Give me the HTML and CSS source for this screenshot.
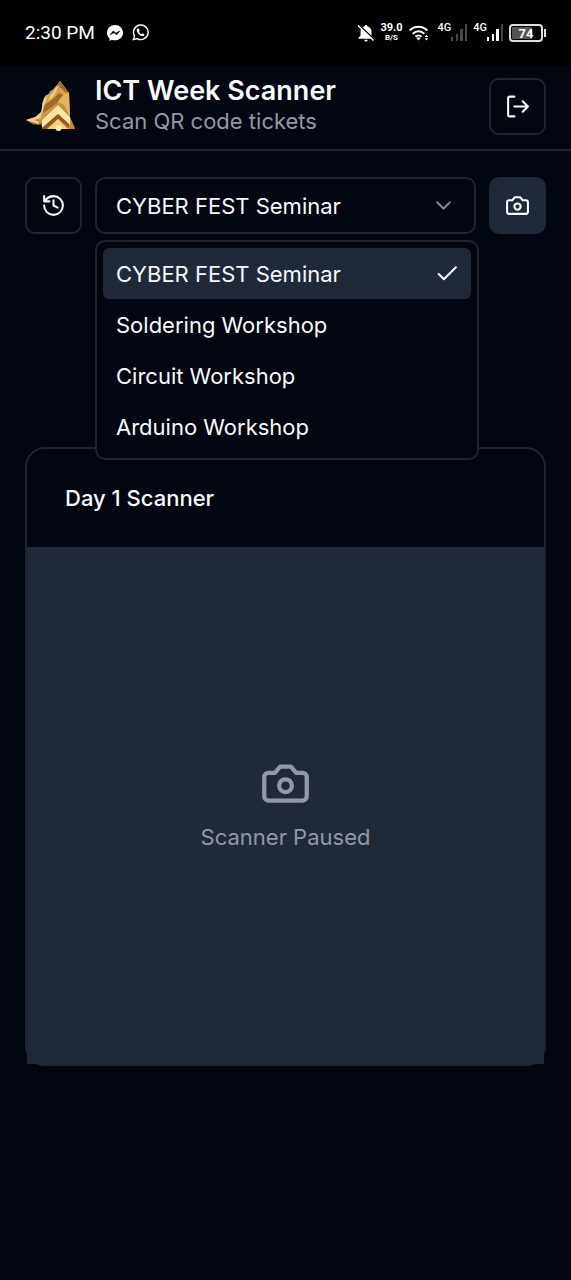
FILE: index.html
```html
<!DOCTYPE html>
<html lang="en">
<head>
<meta charset="utf-8">
<meta name="viewport" content="width=device-width, initial-scale=1">
<title>ICT Week Scanner</title>
<link rel="stylesheet" href="styles.css">
</head>
<body>
<div class="status-bar">
  <div class="status-left">
    <span class="clock">2:30 PM</span>
    <svg class="app-icon" viewBox="0 0 16 16" aria-hidden="true"><path fill="#fff" d="M8 0C3.500 0 0 3.300 0 7.700c0 2.300 1 4.200 2.500 5.600V16l2.300-1.200c1 .4 2 .5 3.200.5 4.500 0 8-3.300 8-7.600S12.500 0 8 0z"/><path d="M3.200 9.700 6.300 6l2.600 2.200L12.800 6 9.700 9.700 7 7.700z" fill="#000" stroke="#000" stroke-width=".6"/></svg>
    <svg class="app-icon app-icon-wide" viewBox="0 0 24 24" aria-hidden="true"><path d="m2 22 1.500-5.300A10.300 10.300 0 1 1 7.200 20.500z" fill="none" stroke="#fff" stroke-width="2"/><path d="M8.300 6.500c-.8 0-1.800 1.200-1.600 2.600.4 3.600 4.600 7.700 8.100 8 1.500.1 2.800-1.200 2.800-2.400l-2.800-1.600-1.500 1.400c-1.600-.7-2.900-2-3.500-3.400l1.100-1.600-1.200-2.800z" fill="#fff"/></svg>
  </div>
  <div class="status-right">
    <svg class="mute-icon" viewBox="0 0 16 18" aria-hidden="true"><path fill="#fff" d="M8 1c.8 0 1.300.5 1.300 1.300C12 3 13.500 5 13.500 7.500v4.300l2 2v1H.5v-1l2-2V7.500C2.500 5 4 3 6.700 2.300 6.700 1.500 7.200 1 8 1zM6.300 15.700h3.400C9.500 17 9 17.500 8 17.500s-1.500-.5-1.700-1.800z"/><path d="m1 1 15 14" stroke="#000" stroke-width="1.500"/><path d="m0 1.500 15.500 15" stroke="#fff" stroke-width="1.500"/></svg>
    <span class="speed"><b>39.0</b><small>B/S</small></span>
    <svg class="wifi-icon" viewBox="0 0 20 16" aria-hidden="true"><g fill="none" stroke="#fff" stroke-width="2"><path d="M.7 5.500c5-5 12.600-5 17.600 0"/><path d="M3.700 8.700c3.300-3.300 8.300-3.300 11.600 0"/><path d="M6.500 11.700c1.700-1.700 4.300-1.700 6 0"/></g><path d="m7.300 13 2.200 2.600 2.200-2.600q-2.200-1.600-4.400 0z" fill="#fff"/><path d="m15.800 12 1.700-2.200 1.700 2.200zm0 1.200h3.400l-1.700 2.200z" fill="#fff"/></svg>
    <span class="network">4G</span>
    <svg class="signal" viewBox="0 0 17 17" aria-hidden="true"><path fill="#484848" d="M0 13h2v4H0zM5 10h2v7H5zM9 5h3v12H9zM14 0h2v17h-2z"/></svg>
    <span class="network">4G</span>
    <svg class="signal" viewBox="0 0 17 17" aria-hidden="true"><path fill="#fff" d="M0 13h2v4H0zM5 10h2v7H5zM9 5h3v12H9z"/><path fill="#484848" d="M14 0h2v17h-2z"/></svg>
    <span class="battery">74</span>
  </div>
</div>

<header class="app-header">
  <svg class="logo" viewBox="0 0 50 52" aria-hidden="true">
    <defs><linearGradient id="gold" x1="0" y1="0" x2="1" y2="1"><stop offset="0" stop-color="#f0c878"/><stop offset="1" stop-color="#a96f24"/></linearGradient></defs>
    <path fill="url(#gold)" d="M35 1 44 13l1 24 5 12-16-1-17-1-1-4-8 1-7-4 10-3 6-5v-8l3-8 5-3 6-7z"/>
    <path fill="#d8a04a" d="M35 1 44 13l-6 2-4-3-6 7-7 5 4-13 3-1z"/>
    <path fill="#a26925" d="m35 1 9 12-4-1-5-5-9 8 5-9zM18 26l10-7 6-6 4 2-7 9-13 9z"/>
    <path fill="#e6b45f" d="m38 15 6-2 1 24-6-12-6-3z"/>
    <path fill="#f8cf79" d="m31 7 4-2-8 13-4 2zM19 18l3-1-3 10-2 8-1-3z"/>
    <path fill="#ab702b" d="m4 40 8-1 5 5-3 1-7-1z"/>
    <path fill="#f3ca82" d="m1 40 9-3 6-5v6l-6 2 5 2-2 2z"/>
    <path fill="#c58c37" d="m33 25 12 12 5 12H17v-9z"/>
    <path fill="#ffe5a6" d="m33 25 12 12v8L33 34 17 48v-8z"/>
    <path fill="#94581d" d="m33 34 11 10v4l-11-9-11 10h-5v-1z"/>
    <path fill="#f6ce83" d="m33 39 10 10H22z"/>
    <circle cx="33.500" cy="48" r="3" fill="#fff0bb"/>
  </svg>
  <div class="brand">
    <h1>ICT Week Scanner</h1>
    <p>Scan QR code tickets</p>
  </div>
  <button class="icon-button" type="button" aria-label="Log out">
    <svg class="icon" viewBox="0 0 24 24"><path d="M9 2.500H4.500Q3 2.500 3 4v16q0 1.500 1.500 1.500H9M9 12h13M17 7l5 5-5 5"/></svg>
  </button>
</header>

<main>
  <div class="controls">
    <button class="icon-button" type="button" aria-label="History">
      <svg class="icon" viewBox="0 0 24 24"><path d="M3 12a9 9 0 1 0 9-9 9.750 9.750 0 0 0-6.740 2.740L3 8M3 3v5h5M12 7v5l4 2"/></svg>
    </button>
    <div class="event-picker">
      <button class="trigger" type="button" role="combobox" aria-label="Event" aria-expanded="true" aria-controls="events">
        <span>CYBER FEST Seminar</span>
        <svg class="icon chevron" viewBox="0 0 24 24"><path d="m6 9 6 6 6-6"/></svg>
      </button>
      <ul class="menu" id="events" role="listbox" aria-label="Events">
        <li class="option selected" role="option" aria-selected="true"><span>CYBER FEST Seminar</span><svg class="icon" viewBox="0 0 24 24"><path d="M21 6 9.500 17.500l-5-5"/></svg></li>
        <li class="option" role="option" aria-selected="false">Soldering Workshop</li>
        <li class="option" role="option" aria-selected="false">Circuit Workshop</li>
        <li class="option" role="option" aria-selected="false">Arduino Workshop</li>
      </ul>
    </div>
    <button class="icon-button filled" type="button" aria-label="Camera">
      <svg class="icon" viewBox="0 0 24 24"><path d="M14.500 4h-5L7 7H4a2 2 0 0 0-2 2v9a2 2 0 0 0 2 2h16a2 2 0 0 0 2-2V9a2 2 0 0 0-2-2h-3z"/><circle cx="12" cy="13" r="3"/></svg>
    </button>
  </div>

  <section class="card">
    <h2>Day 1 Scanner</h2>
    <div class="viewfinder">
      <svg class="icon icon-large" viewBox="0 0 24 24" aria-hidden="true"><path d="M14.500 4h-5L7 7H4a2 2 0 0 0-2 2v9a2 2 0 0 0 2 2h16a2 2 0 0 0 2-2V9a2 2 0 0 0-2-2h-3z"/><circle cx="12" cy="13" r="3"/></svg>
      <p>Scanner Paused</p>
    </div>
  </section>
</main>
</body>
</html>
```
FILE: styles.css
```css
:root {
  --background: #020610;
  --border: #1f2430;
  --surface: #202937;
  --text: #f8fafc;
  --muted: #9298a6;
}

* { box-sizing: border-box; }

body {
  margin: 0;
  min-height: 100vh;
  background: var(--background);
  color: var(--text);
  font: 22px/32px Inter, sans-serif;
}

h1, h2, p, ul { margin: 0; padding: 0; }
button { font: inherit; color: inherit; padding: 0; }

/* Phone status bar */
.status-bar {
  display: flex;
  align-items: center;
  justify-content: space-between;
  height: 65px;
  padding: 0 25px;
  background: #000;
  color: #fff;
  font-family: Roboto, sans-serif;
}
.status-left, .status-right { display: flex; align-items: center; }
.clock { font-size: 19px; margin-right: 12px; }
.app-icon { width: 16px; height: 16px; margin-right: 9px; }
.app-icon-wide { width: 17px; height: 17px; }
.mute-icon { width: 16px; height: 18px; margin-right: 6px; }
.speed { display: flex; flex-direction: column; align-items: center; margin-right: 6px; }
.speed b { font-size: 11px; line-height: 11px; font-weight: 700; }
.speed small { font-size: 8px; line-height: 10px; font-weight: 700; }
.wifi-icon { width: 20px; height: 16px; margin-right: 9px; }
.network { align-self: flex-start; font-size: 11px; line-height: 12px; font-weight: 500; }
.signal { width: 17px; height: 17px; margin-right: 5px; }
.battery {
  position: relative;
  width: 34px;
  height: 18px;
  margin-right: 3px;
  border: 2px solid #ddd;
  border-radius: 4px;
  background: linear-gradient(90deg, #555 72%, #000 72%) content-box;
  padding: 1px;
  font-size: 13px;
  line-height: 13px;
  font-weight: 700;
  text-align: center;
}
.battery::after {
  content: "";
  position: absolute;
  right: -5px;
  top: 3px;
  width: 2px;
  height: 8px;
  background: #ddd;
}

/* Header */
.app-header {
  display: flex;
  align-items: center;
  gap: 20px;
  padding: 11px 25px 13px;
  border-bottom: 2px solid var(--border);
}
.logo { width: 50px; height: 52px; flex: none; }
.brand { flex: 1; }
.brand h1 { font-size: 27px; line-height: 30px; font-weight: 600; }
.brand p { line-height: 30px; color: var(--muted); }

.icon {
  width: 25px;
  height: 25px;
  flex: none;
  fill: none;
  stroke: currentColor;
  stroke-width: 2;
  stroke-linecap: round;
  stroke-linejoin: round;
}
.icon-button {
  display: grid;
  place-items: center;
  flex: none;
  width: 57px;
  height: 57px;
  background: transparent;
  border: 2px solid var(--border);
  border-radius: 10px;
}
.icon-button.filled { background: var(--surface); border-color: var(--surface); }

/* Event selection */
main { padding: 26px 25px; }
.controls { display: flex; gap: 13px; margin-bottom: 213px; }
.event-picker { position: relative; flex: 1; }
.trigger {
  display: flex;
  align-items: center;
  justify-content: space-between;
  width: 100%;
  height: 57px;
  padding: 0 18px 0 19px;
  background: transparent;
  border: 2px solid var(--border);
  border-radius: 10px;
}
.chevron { color: #8b909b; }
.menu {
  position: absolute;
  z-index: 1;
  top: calc(100% + 6px);
  left: 0;
  right: -3px;
  padding: 6px;
  list-style: none;
  background: var(--background);
  border: 2px solid var(--border);
  border-radius: 10px;
}
.option {
  display: flex;
  align-items: center;
  justify-content: space-between;
  height: 51px;
  padding: 0 12px 0 13px;
  border-radius: 6px;
}
.option.selected { background: var(--surface); }

/* Scanner */
.card { border: 2px solid var(--border); border-radius: 20px; }
.card h2 { padding: 33px 38px; font-size: 22px; line-height: 32px; font-weight: 500; }
.viewfinder {
  display: flex;
  flex-direction: column;
  align-items: center;
  justify-content: center;
  gap: 12px;
  aspect-ratio: 1;
  background: var(--surface);
  color: var(--muted);
}
.icon-large { width: 51px; height: 51px; }
```
